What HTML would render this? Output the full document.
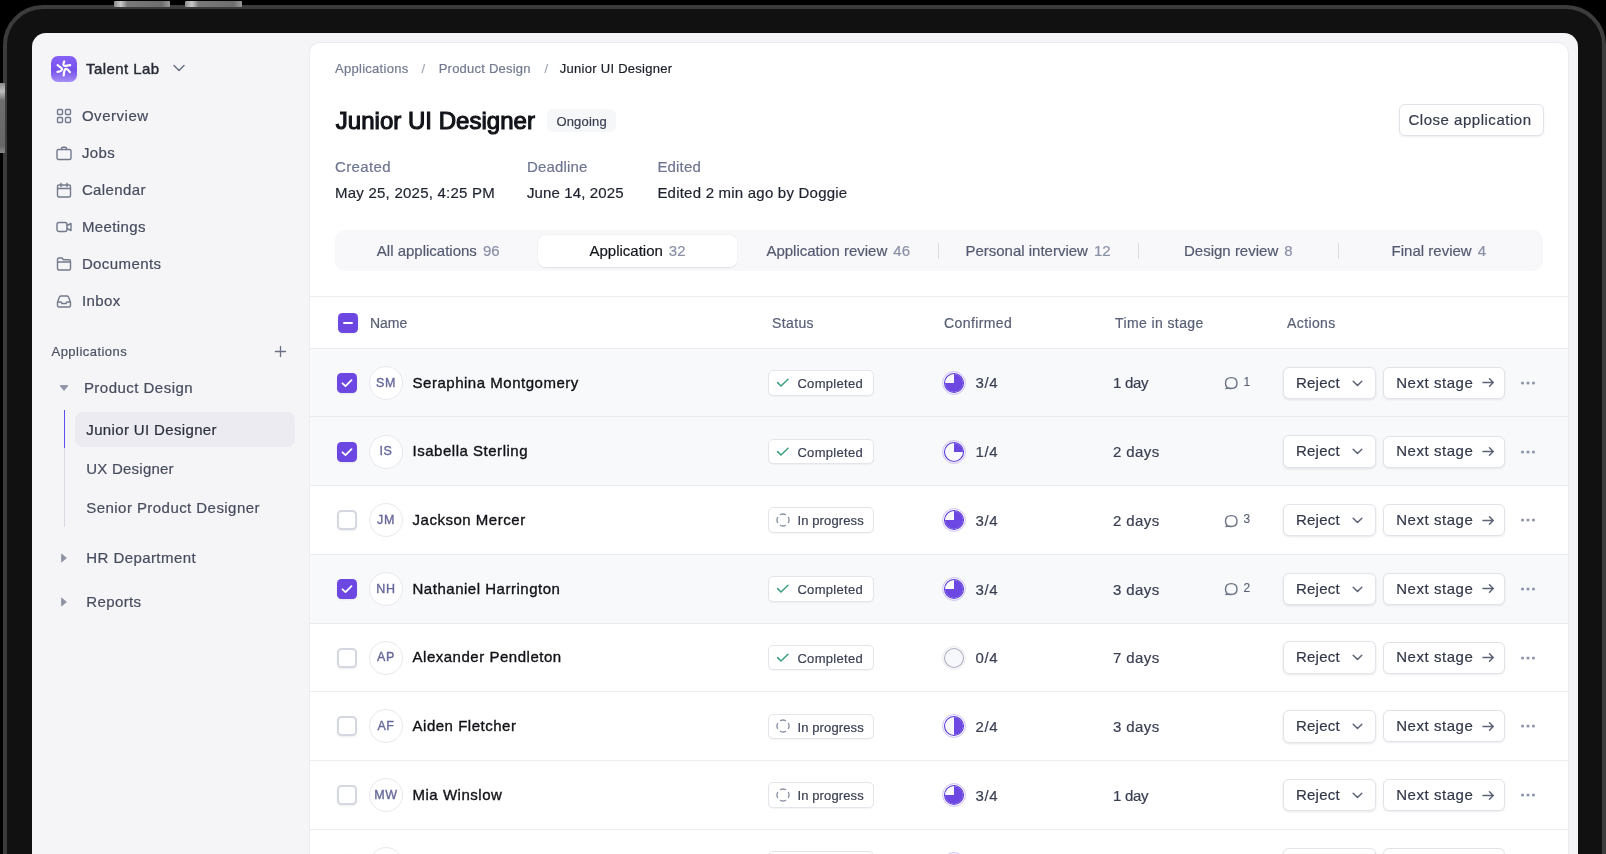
<!DOCTYPE html>
<html><head><meta charset="utf-8"><style>
html,body{margin:0;padding:0;}
body{width:1606px;height:854px;overflow:hidden;background:#000;position:relative;font-family:"Liberation Sans", sans-serif;}
#root{position:absolute;left:0;top:0;width:1606px;height:854px;overflow:hidden;will-change:transform;}
.t{position:absolute;white-space:nowrap;line-height:1;}
.ab{position:absolute;}
.device{position:absolute;left:3px;top:5px;width:1595px;height:950px;border:4px solid #3c3c3c;background:#111;border-radius:40px;}
.screen{position:absolute;left:32px;top:33px;width:1546px;height:900px;background:#f5f5f7;border-radius:14px;}
.card{position:absolute;left:309px;top:42px;width:1258px;height:900px;background:#fff;border:1px solid #ebebf0;border-radius:11px;}
.btn-top{position:absolute;top:1px;height:5.5px;border-radius:1px;background:linear-gradient(90deg,#8a8a8a 0%,#c9c9c9 12%,#7a7a7a 24%,#6e6e6e 85%,#9a9a9a 100%);}
.btn-left{position:absolute;left:0;top:83px;width:5px;height:70px;border-radius:0 1px 1px 0;background:linear-gradient(180deg,#8a8a8a 0%,#bdbdbd 12%,#6e6e6e 25%,#666 90%,#8a8a8a 100%);}
.logo{position:absolute;left:51.3px;top:56px;width:25.5px;height:25.5px;border-radius:7px;background:linear-gradient(180deg,#8561f6 0%,#7753ed 55%,#a68df6 100%);}
.logo svg{position:absolute;left:0;top:0;}
.btn{background:#fff;border:1px solid #e1e3e9;border-radius:6px;box-sizing:border-box;box-shadow:0 1px 2px rgba(16,24,40,0.08);}
.cbx{width:20px;height:20px;box-sizing:border-box;border-radius:4.5px;border:2px solid #d5d8e0;background:#fff;box-shadow:0 1px 2px rgba(20,24,40,0.08);}
.cbx.on{background:#6c47e1;border:none;}
.avatar{width:34px;height:34px;box-sizing:border-box;border-radius:50%;border:1px solid #e8e8ee;background:#fff;}
.badge{width:106px;height:25.6px;box-sizing:border-box;border-radius:5px;border:1px solid #e3e5eb;background:#fff;box-shadow:0 1px 1px rgba(20,24,40,0.04);}
</style></head><body><div id="root">
<div class="device"></div>
<div class="btn-top" style="left:114px;width:56px"></div>
<div class="btn-top" style="left:185px;width:57px"></div>
<div class="btn-left"></div>
<div class="screen"></div>
<div class="card"></div>
<div class="logo"><svg width="26" height="26" viewBox="0 0 26 26">
<g fill="none" stroke="#fff" stroke-width="2.2" stroke-linecap="round" stroke-linejoin="round">
<path d="M13.2 5.5 Q11.0 10.3 14.4 9.95 L19.2 9.1"/>
<path d="M6.6 9.1 L9.9 11.6 Q12.0 13.2 10.2 14.6 Q8.8 15.6 6.5 15.8"/>
<path d="M12.6 19.5 L13.3 15.3 Q13.8 12.8 15.5 12.95 Q16.9 13.3 18.9 16.1"/>
</g></svg></div>
<div class="t" style="left:86.10px;top:60.70px;font-size:15px;color:#272b37;letter-spacing:0.418px;font-weight:400;-webkit-text-stroke:0.4px #272b37;">Talent Lab</div>
<svg class="ab" style="left:172px;top:63px" width="14" height="10" viewBox="0 0 14 10"><path d="M2 2.5 L7 7.5 L12 2.5" fill="none" stroke="#6b7183" stroke-width="1.5" stroke-linecap="round" stroke-linejoin="round"/></svg>
<svg class="ab" style="left:56px;top:108px" width="16" height="16" viewBox="0 0 16 16"><g fill="none" stroke="#737a8c" stroke-width="1.4" stroke-linecap="round" stroke-linejoin="round"><rect x="1.5" y="1.5" width="5" height="5" rx="1"/><rect x="9.5" y="1.5" width="5" height="5" rx="1"/><rect x="1.5" y="9.5" width="5" height="5" rx="1"/><rect x="9.5" y="9.5" width="5" height="5" rx="1"/></g></svg>
<div class="t" style="left:81.90px;top:108.30px;font-size:15px;color:#474c5e;letter-spacing:0.536px;font-weight:400;-webkit-text-stroke:0.2px #474c5e;">Overview</div>
<svg class="ab" style="left:56px;top:145px" width="16" height="16" viewBox="0 0 16 16"><g fill="none" stroke="#737a8c" stroke-width="1.4" stroke-linecap="round" stroke-linejoin="round"><rect x="1" y="4.5" width="14" height="10" rx="1.5"/><path d="M5.5 4.5 V3.5 Q5.5 2.2 6.8 2.2 H9.2 Q10.5 2.2 10.5 3.5 V4.5"/></g></svg>
<div class="t" style="left:81.90px;top:145.30px;font-size:15px;color:#474c5e;letter-spacing:0.400px;font-weight:400;-webkit-text-stroke:0.2px #474c5e;">Jobs</div>
<svg class="ab" style="left:56px;top:182px" width="16" height="16" viewBox="0 0 16 16"><g fill="none" stroke="#737a8c" stroke-width="1.4" stroke-linecap="round" stroke-linejoin="round"><rect x="1.5" y="3" width="13" height="12" rx="1.5"/><path d="M1.5 6.5 H14.5 M5 1.2 V4.5 M11 1.2 V4.5"/></g></svg>
<div class="t" style="left:81.90px;top:182.30px;font-size:15px;color:#474c5e;letter-spacing:0.400px;font-weight:400;-webkit-text-stroke:0.2px #474c5e;">Calendar</div>
<svg class="ab" style="left:56px;top:219px" width="16" height="16" viewBox="0 0 16 16"><g fill="none" stroke="#737a8c" stroke-width="1.4" stroke-linecap="round" stroke-linejoin="round"><rect x="1" y="3.5" width="10" height="9" rx="2"/><path d="M11 6.5 L15 4.5 V11.5 L11 9.5"/></g></svg>
<div class="t" style="left:81.90px;top:219.30px;font-size:15px;color:#474c5e;letter-spacing:0.400px;font-weight:400;-webkit-text-stroke:0.2px #474c5e;">Meetings</div>
<svg class="ab" style="left:56px;top:256px" width="16" height="16" viewBox="0 0 16 16"><g fill="none" stroke="#737a8c" stroke-width="1.4" stroke-linecap="round" stroke-linejoin="round"><path d="M1.5 3.5 Q1.5 2 3 2 H6 L7.5 3.8 H13 Q14.5 3.8 14.5 5.3 V12.5 Q14.5 14 13 14 H3 Q1.5 14 1.5 12.5 Z M1.5 6 H14.5"/></g></svg>
<div class="t" style="left:81.90px;top:256.30px;font-size:15px;color:#474c5e;letter-spacing:0.400px;font-weight:400;-webkit-text-stroke:0.2px #474c5e;">Documents</div>
<svg class="ab" style="left:56px;top:293px" width="16" height="16" viewBox="0 0 16 16"><g fill="none" stroke="#737a8c" stroke-width="1.4" stroke-linecap="round" stroke-linejoin="round"><path d="M1.5 9 L3.5 4 Q4 3 5 3 H11 Q12 3 12.5 4 L14.5 9 V12.5 Q14.5 14 13 14 H3 Q1.5 14 1.5 12.5 Z M1.5 9 H5 L6 10.5 H10 L11 9 H14.5"/></g></svg>
<div class="t" style="left:81.90px;top:293.30px;font-size:15px;color:#474c5e;letter-spacing:0.400px;font-weight:400;-webkit-text-stroke:0.2px #474c5e;">Inbox</div>
<div class="t" style="left:51.50px;top:345.00px;font-size:13px;color:#4d5264;letter-spacing:0.467px;font-weight:400;-webkit-text-stroke:0.2px #4d5264;">Applications</div>
<svg class="ab" style="left:274px;top:345px" width="13" height="13" viewBox="0 0 13 13"><path d="M6.5 1.4 V11.6 M1.4 6.5 H11.6" stroke="#6b7183" stroke-width="1.3" stroke-linecap="round"/></svg>
<svg class="ab" style="left:59px;top:384px" width="10" height="8" viewBox="0 0 10 8"><path d="M1 1.5 H9 L5 6.5 Z" fill="#8e94a4" stroke="#8e94a4" stroke-width="0.8" stroke-linejoin="round"/></svg>
<div class="t" style="left:83.90px;top:380.30px;font-size:15px;color:#474c5e;letter-spacing:0.475px;font-weight:400;-webkit-text-stroke:0.2px #474c5e;">Product Design</div>
<div class="ab" style="left:64px;top:410px;width:1px;height:117px;background:#d9dae3"></div>
<div class="ab" style="left:63.8px;top:410px;width:1.6px;height:38px;background:#5d4ff0"></div>
<div class="ab" style="left:75px;top:412px;width:220px;height:35px;background:#ebebf1;border-radius:8px"></div>
<div class="t" style="left:86.30px;top:421.80px;font-size:15px;color:#2b2f3c;letter-spacing:0.355px;font-weight:400;-webkit-text-stroke:0.2px #2b2f3c;">Junior UI Designer</div>
<div class="t" style="left:86.30px;top:461.30px;font-size:15px;color:#474c5e;letter-spacing:0.224px;font-weight:400;-webkit-text-stroke:0.2px #474c5e;">UX Designer</div>
<div class="t" style="left:86.30px;top:500.30px;font-size:15px;color:#474c5e;letter-spacing:0.443px;font-weight:400;-webkit-text-stroke:0.2px #474c5e;">Senior Product Designer</div>
<svg class="ab" style="left:60px;top:553px" width="8" height="10" viewBox="0 0 8 10"><path d="M1.5 1 V9 L6.5 5 Z" fill="#8e94a4" stroke="#8e94a4" stroke-width="0.8" stroke-linejoin="round"/></svg>
<div class="t" style="left:86.30px;top:550.30px;font-size:15px;color:#474c5e;letter-spacing:0.423px;font-weight:400;-webkit-text-stroke:0.2px #474c5e;">HR Department</div>
<svg class="ab" style="left:60px;top:596.5px" width="8" height="10" viewBox="0 0 8 10"><path d="M1.5 1 V9 L6.5 5 Z" fill="#8e94a4" stroke="#8e94a4" stroke-width="0.8" stroke-linejoin="round"/></svg>
<div class="t" style="left:86.30px;top:593.80px;font-size:15px;color:#474c5e;letter-spacing:0.368px;font-weight:400;-webkit-text-stroke:0.2px #474c5e;">Reports</div>
<div class="t" style="left:335.00px;top:62.00px;font-size:13px;color:#737a91;letter-spacing:0.283px;font-weight:400;-webkit-text-stroke:0.2px #737a91;">Applications</div>
<div class="t" style="left:421.50px;top:62.00px;font-size:13px;color:#a2a7b8;letter-spacing:0.400px;font-weight:400;-webkit-text-stroke:0.2px #a2a7b8;">/</div>
<div class="t" style="left:438.70px;top:62.00px;font-size:13px;color:#737a91;letter-spacing:0.223px;font-weight:400;-webkit-text-stroke:0.2px #737a91;">Product Design</div>
<div class="t" style="left:544.50px;top:62.00px;font-size:13px;color:#a2a7b8;letter-spacing:0.400px;font-weight:400;-webkit-text-stroke:0.2px #a2a7b8;">/</div>
<div class="t" style="left:559.80px;top:62.00px;font-size:13px;color:#1c1f29;letter-spacing:0.275px;font-weight:400;-webkit-text-stroke:0.2px #1c1f29;">Junior UI Designer</div>
<div class="t" style="left:335.80px;top:108.68px;font-size:24px;color:#111318;letter-spacing:0.025px;font-weight:400;-webkit-text-stroke:1.1px #111318;">Junior UI Designer</div>
<div class="ab" style="left:547px;top:109px;width:69px;height:23px;background:#f6f7f9;border-radius:6px"></div>
<div class="t" style="left:556.40px;top:114.80px;font-size:13px;color:#3a3f52;letter-spacing:0.193px;font-weight:400;-webkit-text-stroke:0.2px #3a3f52;">Ongoing</div>
<div class="ab btn" style="left:1399px;top:104px;width:145px;height:32px;"></div>
<div class="t" style="left:1408.50px;top:111.90px;font-size:15px;color:#363b4c;letter-spacing:0.515px;font-weight:400;-webkit-text-stroke:0.2px #363b4c;">Close application</div>
<div class="t" style="left:335.00px;top:158.70px;font-size:15px;color:#6e7590;letter-spacing:0.376px;font-weight:400;-webkit-text-stroke:0.2px #6e7590;">Created</div>
<div class="t" style="left:335.00px;top:185.10px;font-size:15px;color:#1f2330;letter-spacing:0.234px;font-weight:400;-webkit-text-stroke:0.2px #1f2330;">May 25, 2025, 4:25 PM</div>
<div class="t" style="left:527.00px;top:158.70px;font-size:15px;color:#6e7590;letter-spacing:0.161px;font-weight:400;-webkit-text-stroke:0.2px #6e7590;">Deadline</div>
<div class="t" style="left:527.00px;top:185.10px;font-size:15px;color:#1f2330;letter-spacing:0.124px;font-weight:400;-webkit-text-stroke:0.2px #1f2330;">June 14, 2025</div>
<div class="t" style="left:657.40px;top:158.70px;font-size:15px;color:#6e7590;letter-spacing:0.178px;font-weight:400;-webkit-text-stroke:0.2px #6e7590;">Edited</div>
<div class="t" style="left:657.40px;top:185.10px;font-size:15px;color:#1f2330;letter-spacing:0.220px;font-weight:400;-webkit-text-stroke:0.2px #1f2330;">Edited 2 min ago by Doggie</div>
<div class="ab" style="left:335px;top:230px;width:1208px;height:41px;background:#f8f8fa;border-radius:10px"></div>
<div class="ab" style="left:538px;top:235px;width:199px;height:32px;background:#fff;border-radius:7px;box-shadow:0 0.5px 1.5px rgba(20,20,40,0.10)"></div>
<div class="t" style="left:338.2px;width:200px;top:242.90px;font-size:15px;text-align:center;color:#545a70;-webkit-text-stroke:0.2px #545a70">All applications<span style="color:#8a90a6;-webkit-text-stroke:0.2px #8a90a6;margin-left:6px">96</span></div>
<div class="t" style="left:537.5px;width:200px;top:242.90px;font-size:15px;text-align:center;color:#14161d;-webkit-text-stroke:0.2px #14161d">Application<span style="color:#8a90a6;-webkit-text-stroke:0.2px #8a90a6;margin-left:6px">32</span></div>
<div class="t" style="left:738.2px;width:200px;top:242.90px;font-size:15px;text-align:center;color:#545a70;-webkit-text-stroke:0.2px #545a70">Application review<span style="color:#8a90a6;-webkit-text-stroke:0.2px #8a90a6;margin-left:6px">46</span></div>
<div class="t" style="left:938px;width:200px;top:242.90px;font-size:15px;text-align:center;color:#545a70;-webkit-text-stroke:0.2px #545a70">Personal interview<span style="color:#8a90a6;-webkit-text-stroke:0.2px #8a90a6;margin-left:6px">12</span></div>
<div class="t" style="left:1138.3px;width:200px;top:242.90px;font-size:15px;text-align:center;color:#545a70;-webkit-text-stroke:0.2px #545a70">Design review<span style="color:#8a90a6;-webkit-text-stroke:0.2px #8a90a6;margin-left:6px">8</span></div>
<div class="t" style="left:1338.8px;width:200px;top:242.90px;font-size:15px;text-align:center;color:#545a70;-webkit-text-stroke:0.2px #545a70">Final review<span style="color:#8a90a6;-webkit-text-stroke:0.2px #8a90a6;margin-left:6px">4</span></div>
<div class="ab" style="left:938px;top:243px;width:1px;height:16px;background:#dcdde4"></div>
<div class="ab" style="left:1138px;top:243px;width:1px;height:16px;background:#dcdde4"></div>
<div class="ab" style="left:1338px;top:243px;width:1px;height:16px;background:#dcdde4"></div>
<div class="ab" style="left:310px;top:296px;width:1258px;height:1px;background:#ececf0"></div>
<div class="ab cbx on" style="left:337.5px;top:313px"><div style="position:absolute;left:5px;top:9px;width:10px;height:2px;background:#fff;border-radius:1px"></div></div>
<div class="t" style="left:369.90px;top:316.15px;font-size:14px;color:#596076;letter-spacing:-0.011px;font-weight:400;-webkit-text-stroke:0.2px #596076;">Name</div>
<div class="t" style="left:772.00px;top:316.15px;font-size:14px;color:#596076;letter-spacing:0.385px;font-weight:400;-webkit-text-stroke:0.2px #596076;">Status</div>
<div class="t" style="left:944.00px;top:316.15px;font-size:14px;color:#596076;letter-spacing:0.400px;font-weight:400;-webkit-text-stroke:0.2px #596076;">Confirmed</div>
<div class="t" style="left:1115.00px;top:316.15px;font-size:14px;color:#596076;letter-spacing:0.400px;font-weight:400;-webkit-text-stroke:0.2px #596076;">Time in stage</div>
<div class="t" style="left:1287.00px;top:316.15px;font-size:14px;color:#596076;letter-spacing:0.400px;font-weight:400;-webkit-text-stroke:0.2px #596076;">Actions</div>
<div class="ab" style="left:310px;top:348.20px;width:1258px;height:68.70px;background:#f8f9fb"></div>
<div class="ab" style="left:310px;top:347.70px;width:1258px;height:1px;background:#ececf0"></div>
<div class="ab cbx on" style="left:337px;top:372.85px"><svg width="20" height="20" viewBox="-0.5 -0.5 20 20" style="position:absolute;left:0;top:0"><path d="M5 9.8 L8 12.6 L14 6.6" fill="none" stroke="#fff" stroke-width="1.8" stroke-linecap="round" stroke-linejoin="round"/></svg></div>
<div class="ab avatar" style="left:369px;top:365.85px"></div>
<div class="t" style="left:366.00px;width:40px;text-align:center;top:376.57px;font-size:12.5px;color:#66689a;letter-spacing:0.6px;font-weight:400;-webkit-text-stroke:0.35px #66689a;">SM</div>
<div class="t" style="left:412.50px;top:374.65px;font-size:15px;color:#111217;letter-spacing:0.520px;font-weight:400;-webkit-text-stroke:0.35px #111217;">Seraphina Montgomery</div>
<div class="ab badge" style="left:768px;top:370.05px"></div>
<svg class="ab" style="left:776px;top:377.85px" width="14" height="10" viewBox="0 0 14 10"><path d="M1.6 4.6 L5.0 8.0 L12.0 1.2" fill="none" stroke="#3b9e7c" stroke-width="1.5" stroke-linecap="round" stroke-linejoin="round"/></svg>
<div class="t" style="left:797.40px;top:377.05px;font-size:13px;color:#3a3f52;letter-spacing:0.315px;font-weight:400;-webkit-text-stroke:0.2px #3a3f52;">Completed</div>
<svg class="ab" style="left:941.7px;top:370.85px" width="24" height="24" viewBox="0 0 24 24"><circle cx="12" cy="12" r="11.4" fill="none" stroke="#c9b8f8" stroke-width="0.9"/><circle cx="12" cy="12" r="9.5" fill="#f9f9fd" stroke="#5b3bd9" stroke-width="1.1"/><path d="M12 12 V3 A9 9 0 1 1 3 12 Z" fill="#6c47e1"/></svg>
<div class="t" style="left:975.60px;top:375.45px;font-size:15px;color:#3a3f52;letter-spacing:0.583px;font-weight:400;-webkit-text-stroke:0.2px #3a3f52;">3/4</div>
<div class="t" style="left:1113.00px;top:375.45px;font-size:15px;color:#3a3f52;letter-spacing:-0.279px;font-weight:400;-webkit-text-stroke:0.2px #3a3f52;">1 day</div>
<svg class="ab" style="left:1224px;top:376.35px" width="15" height="14" viewBox="0 0 15 14"><path d="M3.2 11.6 Q1.5 10 1.5 7.2 Q1.5 1.6 7.2 1.6 Q13 1.6 13 7 Q13 12.5 7.2 12.5 Q5.8 12.5 4.6 12 L2 12.6 Z" fill="none" stroke="#6e7487" stroke-width="1.4" stroke-linejoin="round"/></svg>
<div class="t" style="left:1243.60px;top:375.99px;font-size:12px;color:#596076;letter-spacing:0.000px;font-weight:400;-webkit-text-stroke:0.1px #596076;">1</div>
<div class="ab btn" style="left:1283.4px;top:366.65px;width:92.4px;height:32.4px;border-width:1.5px;border-color:#e2e4ea;box-shadow:0 1px 2.5px rgba(16,24,40,0.10)"></div>
<div class="t" style="left:1295.90px;top:374.65px;font-size:15px;color:#333849;letter-spacing:0.247px;font-weight:400;-webkit-text-stroke:0.2px #333849;">Reject</div>
<svg class="ab" style="left:1351px;top:378.50px" width="13" height="9" viewBox="0 0 13 9"><path d="M2.2 2.2 L6.5 6.5 L10.8 2.2" fill="none" stroke="#5e6477" stroke-width="1.5" stroke-linecap="round" stroke-linejoin="round"/></svg>
<div class="ab btn" style="left:1383.4px;top:366.85px;width:122px;height:32px"></div>
<div class="t" style="left:1396.20px;top:374.65px;font-size:15px;color:#333849;letter-spacing:0.550px;font-weight:400;-webkit-text-stroke:0.2px #333849;">Next stage</div>
<svg class="ab" style="left:1481px;top:376.35px" width="15" height="13" viewBox="0 0 15 13"><path d="M2 6.5 H12.3 M8.5 2.75 L12.25 6.5 L8.5 10.25" fill="none" stroke="#5e6477" stroke-width="1.5" stroke-linecap="round" stroke-linejoin="round"/></svg>
<svg class="ab" style="left:1520px;top:379.85px" width="16" height="6" viewBox="0 0 16 6"><circle cx="2.5" cy="3" r="1.6" fill="#9197aa"/><circle cx="8" cy="3" r="1.6" fill="#9197aa"/><circle cx="13.5" cy="3" r="1.6" fill="#9197aa"/></svg>
<div class="ab" style="left:310px;top:416.90px;width:1258px;height:68.70px;background:#f8f9fb"></div>
<div class="ab" style="left:310px;top:416.40px;width:1258px;height:1px;background:#ececf0"></div>
<div class="ab cbx on" style="left:337px;top:441.55px"><svg width="20" height="20" viewBox="-0.5 -0.5 20 20" style="position:absolute;left:0;top:0"><path d="M5 9.8 L8 12.6 L14 6.6" fill="none" stroke="#fff" stroke-width="1.8" stroke-linecap="round" stroke-linejoin="round"/></svg></div>
<div class="ab avatar" style="left:369px;top:434.55px"></div>
<div class="t" style="left:366.00px;width:40px;text-align:center;top:445.27px;font-size:12.5px;color:#66689a;letter-spacing:0.6px;font-weight:400;-webkit-text-stroke:0.35px #66689a;">IS</div>
<div class="t" style="left:412.50px;top:443.35px;font-size:15px;color:#111217;letter-spacing:0.520px;font-weight:400;-webkit-text-stroke:0.35px #111217;">Isabella Sterling</div>
<div class="ab badge" style="left:768px;top:438.75px"></div>
<svg class="ab" style="left:776px;top:446.55px" width="14" height="10" viewBox="0 0 14 10"><path d="M1.6 4.6 L5.0 8.0 L12.0 1.2" fill="none" stroke="#3b9e7c" stroke-width="1.5" stroke-linecap="round" stroke-linejoin="round"/></svg>
<div class="t" style="left:797.40px;top:445.75px;font-size:13px;color:#3a3f52;letter-spacing:0.315px;font-weight:400;-webkit-text-stroke:0.2px #3a3f52;">Completed</div>
<svg class="ab" style="left:941.7px;top:439.55px" width="24" height="24" viewBox="0 0 24 24"><circle cx="12" cy="12" r="11.4" fill="none" stroke="#c9b8f8" stroke-width="0.9"/><circle cx="12" cy="12" r="9.5" fill="#f9f9fd" stroke="#5b3bd9" stroke-width="1.1"/><path d="M12 12 V3 A9 9 0 0 1 21 12 Z" fill="#6c47e1"/></svg>
<div class="t" style="left:975.60px;top:444.15px;font-size:15px;color:#3a3f52;letter-spacing:0.583px;font-weight:400;-webkit-text-stroke:0.2px #3a3f52;">1/4</div>
<div class="t" style="left:1113.00px;top:444.15px;font-size:15px;color:#3a3f52;letter-spacing:0.400px;font-weight:400;-webkit-text-stroke:0.2px #3a3f52;">2 days</div>
<div class="ab btn" style="left:1283.4px;top:435.35px;width:92.4px;height:32.4px;border-width:1.5px;border-color:#e2e4ea;box-shadow:0 1px 2.5px rgba(16,24,40,0.10)"></div>
<div class="t" style="left:1295.90px;top:443.35px;font-size:15px;color:#333849;letter-spacing:0.247px;font-weight:400;-webkit-text-stroke:0.2px #333849;">Reject</div>
<svg class="ab" style="left:1351px;top:447.20px" width="13" height="9" viewBox="0 0 13 9"><path d="M2.2 2.2 L6.5 6.5 L10.8 2.2" fill="none" stroke="#5e6477" stroke-width="1.5" stroke-linecap="round" stroke-linejoin="round"/></svg>
<div class="ab btn" style="left:1383.4px;top:435.55px;width:122px;height:32px"></div>
<div class="t" style="left:1396.20px;top:443.35px;font-size:15px;color:#333849;letter-spacing:0.550px;font-weight:400;-webkit-text-stroke:0.2px #333849;">Next stage</div>
<svg class="ab" style="left:1481px;top:445.05px" width="15" height="13" viewBox="0 0 15 13"><path d="M2 6.5 H12.3 M8.5 2.75 L12.25 6.5 L8.5 10.25" fill="none" stroke="#5e6477" stroke-width="1.5" stroke-linecap="round" stroke-linejoin="round"/></svg>
<svg class="ab" style="left:1520px;top:448.55px" width="16" height="6" viewBox="0 0 16 6"><circle cx="2.5" cy="3" r="1.6" fill="#9197aa"/><circle cx="8" cy="3" r="1.6" fill="#9197aa"/><circle cx="13.5" cy="3" r="1.6" fill="#9197aa"/></svg>
<div class="ab" style="left:310px;top:485.10px;width:1258px;height:1px;background:#ececf0"></div>
<div class="ab cbx" style="left:337px;top:510.25px"></div>
<div class="ab avatar" style="left:369px;top:503.25px"></div>
<div class="t" style="left:366.00px;width:40px;text-align:center;top:513.97px;font-size:12.5px;color:#66689a;letter-spacing:0.6px;font-weight:400;-webkit-text-stroke:0.35px #66689a;">JM</div>
<div class="t" style="left:412.50px;top:512.05px;font-size:15px;color:#111217;letter-spacing:0.520px;font-weight:400;-webkit-text-stroke:0.35px #111217;">Jackson Mercer</div>
<div class="ab badge" style="left:768px;top:507.45px"></div>
<svg class="ab" style="left:775.8px;top:513.25px" width="14" height="14" viewBox="0 0 14 14"><path d="M12.438 4.464 A6 6 0 0 1 12.438 9.536 M9.536 12.438 A6 6 0 0 1 4.464 12.438 M1.562 9.536 A6 6 0 0 1 1.562 4.464 M4.464 1.562 A6 6 0 0 1 9.536 1.562" fill="none" stroke="#8f95a8" stroke-width="1.4" stroke-linecap="round"/></svg>
<div class="t" style="left:797.40px;top:514.45px;font-size:13px;color:#3a3f52;letter-spacing:0.133px;font-weight:400;-webkit-text-stroke:0.2px #3a3f52;">In progress</div>
<svg class="ab" style="left:941.7px;top:508.25px" width="24" height="24" viewBox="0 0 24 24"><circle cx="12" cy="12" r="11.4" fill="none" stroke="#c9b8f8" stroke-width="0.9"/><circle cx="12" cy="12" r="9.5" fill="#f9f9fd" stroke="#5b3bd9" stroke-width="1.1"/><path d="M12 12 V3 A9 9 0 1 1 3 12 Z" fill="#6c47e1"/></svg>
<div class="t" style="left:975.60px;top:512.85px;font-size:15px;color:#3a3f52;letter-spacing:0.583px;font-weight:400;-webkit-text-stroke:0.2px #3a3f52;">3/4</div>
<div class="t" style="left:1113.00px;top:512.85px;font-size:15px;color:#3a3f52;letter-spacing:0.400px;font-weight:400;-webkit-text-stroke:0.2px #3a3f52;">2 days</div>
<svg class="ab" style="left:1224px;top:513.75px" width="15" height="14" viewBox="0 0 15 14"><path d="M3.2 11.6 Q1.5 10 1.5 7.2 Q1.5 1.6 7.2 1.6 Q13 1.6 13 7 Q13 12.5 7.2 12.5 Q5.8 12.5 4.6 12 L2 12.6 Z" fill="none" stroke="#6e7487" stroke-width="1.4" stroke-linejoin="round"/></svg>
<div class="t" style="left:1243.60px;top:513.39px;font-size:12px;color:#596076;letter-spacing:0.000px;font-weight:400;-webkit-text-stroke:0.1px #596076;">3</div>
<div class="ab btn" style="left:1283.4px;top:504.05px;width:92.4px;height:32.4px;border-width:1.5px;border-color:#e2e4ea;box-shadow:0 1px 2.5px rgba(16,24,40,0.10)"></div>
<div class="t" style="left:1295.90px;top:512.05px;font-size:15px;color:#333849;letter-spacing:0.247px;font-weight:400;-webkit-text-stroke:0.2px #333849;">Reject</div>
<svg class="ab" style="left:1351px;top:515.90px" width="13" height="9" viewBox="0 0 13 9"><path d="M2.2 2.2 L6.5 6.5 L10.8 2.2" fill="none" stroke="#5e6477" stroke-width="1.5" stroke-linecap="round" stroke-linejoin="round"/></svg>
<div class="ab btn" style="left:1383.4px;top:504.25px;width:122px;height:32px"></div>
<div class="t" style="left:1396.20px;top:512.05px;font-size:15px;color:#333849;letter-spacing:0.550px;font-weight:400;-webkit-text-stroke:0.2px #333849;">Next stage</div>
<svg class="ab" style="left:1481px;top:513.75px" width="15" height="13" viewBox="0 0 15 13"><path d="M2 6.5 H12.3 M8.5 2.75 L12.25 6.5 L8.5 10.25" fill="none" stroke="#5e6477" stroke-width="1.5" stroke-linecap="round" stroke-linejoin="round"/></svg>
<svg class="ab" style="left:1520px;top:517.25px" width="16" height="6" viewBox="0 0 16 6"><circle cx="2.5" cy="3" r="1.6" fill="#9197aa"/><circle cx="8" cy="3" r="1.6" fill="#9197aa"/><circle cx="13.5" cy="3" r="1.6" fill="#9197aa"/></svg>
<div class="ab" style="left:310px;top:554.30px;width:1258px;height:68.70px;background:#f8f9fb"></div>
<div class="ab" style="left:310px;top:553.80px;width:1258px;height:1px;background:#ececf0"></div>
<div class="ab cbx on" style="left:337px;top:578.95px"><svg width="20" height="20" viewBox="-0.5 -0.5 20 20" style="position:absolute;left:0;top:0"><path d="M5 9.8 L8 12.6 L14 6.6" fill="none" stroke="#fff" stroke-width="1.8" stroke-linecap="round" stroke-linejoin="round"/></svg></div>
<div class="ab avatar" style="left:369px;top:571.95px"></div>
<div class="t" style="left:366.00px;width:40px;text-align:center;top:582.67px;font-size:12.5px;color:#66689a;letter-spacing:0.6px;font-weight:400;-webkit-text-stroke:0.35px #66689a;">NH</div>
<div class="t" style="left:412.50px;top:580.75px;font-size:15px;color:#111217;letter-spacing:0.520px;font-weight:400;-webkit-text-stroke:0.35px #111217;">Nathaniel Harrington</div>
<div class="ab badge" style="left:768px;top:576.15px"></div>
<svg class="ab" style="left:776px;top:583.95px" width="14" height="10" viewBox="0 0 14 10"><path d="M1.6 4.6 L5.0 8.0 L12.0 1.2" fill="none" stroke="#3b9e7c" stroke-width="1.5" stroke-linecap="round" stroke-linejoin="round"/></svg>
<div class="t" style="left:797.40px;top:583.15px;font-size:13px;color:#3a3f52;letter-spacing:0.315px;font-weight:400;-webkit-text-stroke:0.2px #3a3f52;">Completed</div>
<svg class="ab" style="left:941.7px;top:576.95px" width="24" height="24" viewBox="0 0 24 24"><circle cx="12" cy="12" r="11.4" fill="none" stroke="#c9b8f8" stroke-width="0.9"/><circle cx="12" cy="12" r="9.5" fill="#f9f9fd" stroke="#5b3bd9" stroke-width="1.1"/><path d="M12 12 V3 A9 9 0 1 1 3 12 Z" fill="#6c47e1"/></svg>
<div class="t" style="left:975.60px;top:581.55px;font-size:15px;color:#3a3f52;letter-spacing:0.583px;font-weight:400;-webkit-text-stroke:0.2px #3a3f52;">3/4</div>
<div class="t" style="left:1113.00px;top:581.55px;font-size:15px;color:#3a3f52;letter-spacing:0.400px;font-weight:400;-webkit-text-stroke:0.2px #3a3f52;">3 days</div>
<svg class="ab" style="left:1224px;top:582.45px" width="15" height="14" viewBox="0 0 15 14"><path d="M3.2 11.6 Q1.5 10 1.5 7.2 Q1.5 1.6 7.2 1.6 Q13 1.6 13 7 Q13 12.5 7.2 12.5 Q5.8 12.5 4.6 12 L2 12.6 Z" fill="none" stroke="#6e7487" stroke-width="1.4" stroke-linejoin="round"/></svg>
<div class="t" style="left:1243.60px;top:582.09px;font-size:12px;color:#596076;letter-spacing:0.000px;font-weight:400;-webkit-text-stroke:0.1px #596076;">2</div>
<div class="ab btn" style="left:1283.4px;top:572.75px;width:92.4px;height:32.4px;border-width:1.5px;border-color:#e2e4ea;box-shadow:0 1px 2.5px rgba(16,24,40,0.10)"></div>
<div class="t" style="left:1295.90px;top:580.75px;font-size:15px;color:#333849;letter-spacing:0.247px;font-weight:400;-webkit-text-stroke:0.2px #333849;">Reject</div>
<svg class="ab" style="left:1351px;top:584.60px" width="13" height="9" viewBox="0 0 13 9"><path d="M2.2 2.2 L6.5 6.5 L10.8 2.2" fill="none" stroke="#5e6477" stroke-width="1.5" stroke-linecap="round" stroke-linejoin="round"/></svg>
<div class="ab btn" style="left:1383.4px;top:572.95px;width:122px;height:32px"></div>
<div class="t" style="left:1396.20px;top:580.75px;font-size:15px;color:#333849;letter-spacing:0.550px;font-weight:400;-webkit-text-stroke:0.2px #333849;">Next stage</div>
<svg class="ab" style="left:1481px;top:582.45px" width="15" height="13" viewBox="0 0 15 13"><path d="M2 6.5 H12.3 M8.5 2.75 L12.25 6.5 L8.5 10.25" fill="none" stroke="#5e6477" stroke-width="1.5" stroke-linecap="round" stroke-linejoin="round"/></svg>
<svg class="ab" style="left:1520px;top:585.95px" width="16" height="6" viewBox="0 0 16 6"><circle cx="2.5" cy="3" r="1.6" fill="#9197aa"/><circle cx="8" cy="3" r="1.6" fill="#9197aa"/><circle cx="13.5" cy="3" r="1.6" fill="#9197aa"/></svg>
<div class="ab" style="left:310px;top:622.50px;width:1258px;height:1px;background:#ececf0"></div>
<div class="ab cbx" style="left:337px;top:647.65px"></div>
<div class="ab avatar" style="left:369px;top:640.65px"></div>
<div class="t" style="left:366.00px;width:40px;text-align:center;top:651.37px;font-size:12.5px;color:#66689a;letter-spacing:0.6px;font-weight:400;-webkit-text-stroke:0.35px #66689a;">AP</div>
<div class="t" style="left:412.50px;top:649.45px;font-size:15px;color:#111217;letter-spacing:0.520px;font-weight:400;-webkit-text-stroke:0.35px #111217;">Alexander Pendleton</div>
<div class="ab badge" style="left:768px;top:644.85px"></div>
<svg class="ab" style="left:776px;top:652.65px" width="14" height="10" viewBox="0 0 14 10"><path d="M1.6 4.6 L5.0 8.0 L12.0 1.2" fill="none" stroke="#3b9e7c" stroke-width="1.5" stroke-linecap="round" stroke-linejoin="round"/></svg>
<div class="t" style="left:797.40px;top:651.85px;font-size:13px;color:#3a3f52;letter-spacing:0.315px;font-weight:400;-webkit-text-stroke:0.2px #3a3f52;">Completed</div>
<svg class="ab" style="left:941.7px;top:645.65px" width="24" height="24" viewBox="0 0 24 24"><circle cx="12" cy="12" r="11.4" fill="none" stroke="#e6e6ec" stroke-width="0.9"/><circle cx="12" cy="12" r="9.5" fill="#f7f8fb" stroke="#aeadc4" stroke-width="1.1"/></svg>
<div class="t" style="left:975.60px;top:650.25px;font-size:15px;color:#3a3f52;letter-spacing:0.583px;font-weight:400;-webkit-text-stroke:0.2px #3a3f52;">0/4</div>
<div class="t" style="left:1113.00px;top:650.25px;font-size:15px;color:#3a3f52;letter-spacing:0.400px;font-weight:400;-webkit-text-stroke:0.2px #3a3f52;">7 days</div>
<div class="ab btn" style="left:1283.4px;top:641.45px;width:92.4px;height:32.4px;border-width:1.5px;border-color:#e2e4ea;box-shadow:0 1px 2.5px rgba(16,24,40,0.10)"></div>
<div class="t" style="left:1295.90px;top:649.45px;font-size:15px;color:#333849;letter-spacing:0.247px;font-weight:400;-webkit-text-stroke:0.2px #333849;">Reject</div>
<svg class="ab" style="left:1351px;top:653.30px" width="13" height="9" viewBox="0 0 13 9"><path d="M2.2 2.2 L6.5 6.5 L10.8 2.2" fill="none" stroke="#5e6477" stroke-width="1.5" stroke-linecap="round" stroke-linejoin="round"/></svg>
<div class="ab btn" style="left:1383.4px;top:641.65px;width:122px;height:32px"></div>
<div class="t" style="left:1396.20px;top:649.45px;font-size:15px;color:#333849;letter-spacing:0.550px;font-weight:400;-webkit-text-stroke:0.2px #333849;">Next stage</div>
<svg class="ab" style="left:1481px;top:651.15px" width="15" height="13" viewBox="0 0 15 13"><path d="M2 6.5 H12.3 M8.5 2.75 L12.25 6.5 L8.5 10.25" fill="none" stroke="#5e6477" stroke-width="1.5" stroke-linecap="round" stroke-linejoin="round"/></svg>
<svg class="ab" style="left:1520px;top:654.65px" width="16" height="6" viewBox="0 0 16 6"><circle cx="2.5" cy="3" r="1.6" fill="#9197aa"/><circle cx="8" cy="3" r="1.6" fill="#9197aa"/><circle cx="13.5" cy="3" r="1.6" fill="#9197aa"/></svg>
<div class="ab" style="left:310px;top:691.20px;width:1258px;height:1px;background:#ececf0"></div>
<div class="ab cbx" style="left:337px;top:716.35px"></div>
<div class="ab avatar" style="left:369px;top:709.35px"></div>
<div class="t" style="left:366.00px;width:40px;text-align:center;top:720.07px;font-size:12.5px;color:#66689a;letter-spacing:0.6px;font-weight:400;-webkit-text-stroke:0.35px #66689a;">AF</div>
<div class="t" style="left:412.50px;top:718.15px;font-size:15px;color:#111217;letter-spacing:0.520px;font-weight:400;-webkit-text-stroke:0.35px #111217;">Aiden Fletcher</div>
<div class="ab badge" style="left:768px;top:713.55px"></div>
<svg class="ab" style="left:775.8px;top:719.35px" width="14" height="14" viewBox="0 0 14 14"><path d="M12.438 4.464 A6 6 0 0 1 12.438 9.536 M9.536 12.438 A6 6 0 0 1 4.464 12.438 M1.562 9.536 A6 6 0 0 1 1.562 4.464 M4.464 1.562 A6 6 0 0 1 9.536 1.562" fill="none" stroke="#8f95a8" stroke-width="1.4" stroke-linecap="round"/></svg>
<div class="t" style="left:797.40px;top:720.55px;font-size:13px;color:#3a3f52;letter-spacing:0.133px;font-weight:400;-webkit-text-stroke:0.2px #3a3f52;">In progress</div>
<svg class="ab" style="left:941.7px;top:714.35px" width="24" height="24" viewBox="0 0 24 24"><circle cx="12" cy="12" r="11.4" fill="none" stroke="#c9b8f8" stroke-width="0.9"/><circle cx="12" cy="12" r="9.5" fill="#f9f9fd" stroke="#5b3bd9" stroke-width="1.1"/><path d="M12 12 V3 A9 9 0 0 1 12 21 Z" fill="#6c47e1"/></svg>
<div class="t" style="left:975.60px;top:718.95px;font-size:15px;color:#3a3f52;letter-spacing:0.583px;font-weight:400;-webkit-text-stroke:0.2px #3a3f52;">2/4</div>
<div class="t" style="left:1113.00px;top:718.95px;font-size:15px;color:#3a3f52;letter-spacing:0.400px;font-weight:400;-webkit-text-stroke:0.2px #3a3f52;">3 days</div>
<div class="ab btn" style="left:1283.4px;top:710.15px;width:92.4px;height:32.4px;border-width:1.5px;border-color:#e2e4ea;box-shadow:0 1px 2.5px rgba(16,24,40,0.10)"></div>
<div class="t" style="left:1295.90px;top:718.15px;font-size:15px;color:#333849;letter-spacing:0.247px;font-weight:400;-webkit-text-stroke:0.2px #333849;">Reject</div>
<svg class="ab" style="left:1351px;top:722.00px" width="13" height="9" viewBox="0 0 13 9"><path d="M2.2 2.2 L6.5 6.5 L10.8 2.2" fill="none" stroke="#5e6477" stroke-width="1.5" stroke-linecap="round" stroke-linejoin="round"/></svg>
<div class="ab btn" style="left:1383.4px;top:710.35px;width:122px;height:32px"></div>
<div class="t" style="left:1396.20px;top:718.15px;font-size:15px;color:#333849;letter-spacing:0.550px;font-weight:400;-webkit-text-stroke:0.2px #333849;">Next stage</div>
<svg class="ab" style="left:1481px;top:719.85px" width="15" height="13" viewBox="0 0 15 13"><path d="M2 6.5 H12.3 M8.5 2.75 L12.25 6.5 L8.5 10.25" fill="none" stroke="#5e6477" stroke-width="1.5" stroke-linecap="round" stroke-linejoin="round"/></svg>
<svg class="ab" style="left:1520px;top:723.35px" width="16" height="6" viewBox="0 0 16 6"><circle cx="2.5" cy="3" r="1.6" fill="#9197aa"/><circle cx="8" cy="3" r="1.6" fill="#9197aa"/><circle cx="13.5" cy="3" r="1.6" fill="#9197aa"/></svg>
<div class="ab" style="left:310px;top:759.90px;width:1258px;height:1px;background:#ececf0"></div>
<div class="ab cbx" style="left:337px;top:785.05px"></div>
<div class="ab avatar" style="left:369px;top:778.05px"></div>
<div class="t" style="left:366.00px;width:40px;text-align:center;top:788.77px;font-size:12.5px;color:#66689a;letter-spacing:0.6px;font-weight:400;-webkit-text-stroke:0.35px #66689a;">MW</div>
<div class="t" style="left:412.50px;top:786.85px;font-size:15px;color:#111217;letter-spacing:0.520px;font-weight:400;-webkit-text-stroke:0.35px #111217;">Mia Winslow</div>
<div class="ab badge" style="left:768px;top:782.25px"></div>
<svg class="ab" style="left:775.8px;top:788.05px" width="14" height="14" viewBox="0 0 14 14"><path d="M12.438 4.464 A6 6 0 0 1 12.438 9.536 M9.536 12.438 A6 6 0 0 1 4.464 12.438 M1.562 9.536 A6 6 0 0 1 1.562 4.464 M4.464 1.562 A6 6 0 0 1 9.536 1.562" fill="none" stroke="#8f95a8" stroke-width="1.4" stroke-linecap="round"/></svg>
<div class="t" style="left:797.40px;top:789.25px;font-size:13px;color:#3a3f52;letter-spacing:0.133px;font-weight:400;-webkit-text-stroke:0.2px #3a3f52;">In progress</div>
<svg class="ab" style="left:941.7px;top:783.05px" width="24" height="24" viewBox="0 0 24 24"><circle cx="12" cy="12" r="11.4" fill="none" stroke="#c9b8f8" stroke-width="0.9"/><circle cx="12" cy="12" r="9.5" fill="#f9f9fd" stroke="#5b3bd9" stroke-width="1.1"/><path d="M12 12 V3 A9 9 0 1 1 3 12 Z" fill="#6c47e1"/></svg>
<div class="t" style="left:975.60px;top:787.65px;font-size:15px;color:#3a3f52;letter-spacing:0.583px;font-weight:400;-webkit-text-stroke:0.2px #3a3f52;">3/4</div>
<div class="t" style="left:1113.00px;top:787.65px;font-size:15px;color:#3a3f52;letter-spacing:-0.279px;font-weight:400;-webkit-text-stroke:0.2px #3a3f52;">1 day</div>
<div class="ab btn" style="left:1283.4px;top:778.85px;width:92.4px;height:32.4px;border-width:1.5px;border-color:#e2e4ea;box-shadow:0 1px 2.5px rgba(16,24,40,0.10)"></div>
<div class="t" style="left:1295.90px;top:786.85px;font-size:15px;color:#333849;letter-spacing:0.247px;font-weight:400;-webkit-text-stroke:0.2px #333849;">Reject</div>
<svg class="ab" style="left:1351px;top:790.70px" width="13" height="9" viewBox="0 0 13 9"><path d="M2.2 2.2 L6.5 6.5 L10.8 2.2" fill="none" stroke="#5e6477" stroke-width="1.5" stroke-linecap="round" stroke-linejoin="round"/></svg>
<div class="ab btn" style="left:1383.4px;top:779.05px;width:122px;height:32px"></div>
<div class="t" style="left:1396.20px;top:786.85px;font-size:15px;color:#333849;letter-spacing:0.550px;font-weight:400;-webkit-text-stroke:0.2px #333849;">Next stage</div>
<svg class="ab" style="left:1481px;top:788.55px" width="15" height="13" viewBox="0 0 15 13"><path d="M2 6.5 H12.3 M8.5 2.75 L12.25 6.5 L8.5 10.25" fill="none" stroke="#5e6477" stroke-width="1.5" stroke-linecap="round" stroke-linejoin="round"/></svg>
<svg class="ab" style="left:1520px;top:792.05px" width="16" height="6" viewBox="0 0 16 6"><circle cx="2.5" cy="3" r="1.6" fill="#9197aa"/><circle cx="8" cy="3" r="1.6" fill="#9197aa"/><circle cx="13.5" cy="3" r="1.6" fill="#9197aa"/></svg>
<div class="ab" style="left:310px;top:828.60px;width:1258px;height:1px;background:#ececf0"></div>
<div class="ab cbx" style="left:337px;top:853.75px"></div>
<div class="ab avatar" style="left:369px;top:846.75px"></div>
<div class="t" style="left:366.00px;width:40px;text-align:center;top:857.47px;font-size:12.5px;color:#66689a;letter-spacing:0.6px;font-weight:400;-webkit-text-stroke:0.35px #66689a;">OB</div>
<div class="t" style="left:412.50px;top:855.55px;font-size:15px;color:#111217;letter-spacing:0.520px;font-weight:400;-webkit-text-stroke:0.35px #111217;">Olivia Bennett</div>
<div class="ab badge" style="left:768px;top:850.95px"></div>
<svg class="ab" style="left:776px;top:858.75px" width="14" height="10" viewBox="0 0 14 10"><path d="M1.6 4.6 L5.0 8.0 L12.0 1.2" fill="none" stroke="#3b9e7c" stroke-width="1.5" stroke-linecap="round" stroke-linejoin="round"/></svg>
<div class="t" style="left:797.40px;top:857.95px;font-size:13px;color:#3a3f52;letter-spacing:0.315px;font-weight:400;-webkit-text-stroke:0.2px #3a3f52;">Completed</div>
<svg class="ab" style="left:941.7px;top:851.75px" width="24" height="24" viewBox="0 0 24 24"><circle cx="12" cy="12" r="11.4" fill="none" stroke="#c9b8f8" stroke-width="0.9"/><circle cx="12" cy="12" r="9.5" fill="#f9f9fd" stroke="#5b3bd9" stroke-width="1.1"/><path d="M12 12 V3 A9 9 0 0 1 12 21 Z" fill="#6c47e1"/></svg>
<div class="t" style="left:975.60px;top:856.35px;font-size:15px;color:#3a3f52;letter-spacing:0.583px;font-weight:400;-webkit-text-stroke:0.2px #3a3f52;">2/4</div>
<div class="t" style="left:1113.00px;top:856.35px;font-size:15px;color:#3a3f52;letter-spacing:0.400px;font-weight:400;-webkit-text-stroke:0.2px #3a3f52;">4 days</div>
<div class="ab btn" style="left:1283.4px;top:847.55px;width:92.4px;height:32.4px;border-width:1.5px;border-color:#e2e4ea;box-shadow:0 1px 2.5px rgba(16,24,40,0.10)"></div>
<div class="t" style="left:1295.90px;top:855.55px;font-size:15px;color:#333849;letter-spacing:0.247px;font-weight:400;-webkit-text-stroke:0.2px #333849;">Reject</div>
<svg class="ab" style="left:1351px;top:859.40px" width="13" height="9" viewBox="0 0 13 9"><path d="M2.2 2.2 L6.5 6.5 L10.8 2.2" fill="none" stroke="#5e6477" stroke-width="1.5" stroke-linecap="round" stroke-linejoin="round"/></svg>
<div class="ab btn" style="left:1383.4px;top:847.75px;width:122px;height:32px"></div>
<div class="t" style="left:1396.20px;top:855.55px;font-size:15px;color:#333849;letter-spacing:0.550px;font-weight:400;-webkit-text-stroke:0.2px #333849;">Next stage</div>
<svg class="ab" style="left:1481px;top:857.25px" width="15" height="13" viewBox="0 0 15 13"><path d="M2 6.5 H12.3 M8.5 2.75 L12.25 6.5 L8.5 10.25" fill="none" stroke="#5e6477" stroke-width="1.5" stroke-linecap="round" stroke-linejoin="round"/></svg>
<svg class="ab" style="left:1520px;top:860.75px" width="16" height="6" viewBox="0 0 16 6"><circle cx="2.5" cy="3" r="1.6" fill="#9197aa"/><circle cx="8" cy="3" r="1.6" fill="#9197aa"/><circle cx="13.5" cy="3" r="1.6" fill="#9197aa"/></svg>
</div></body></html>
